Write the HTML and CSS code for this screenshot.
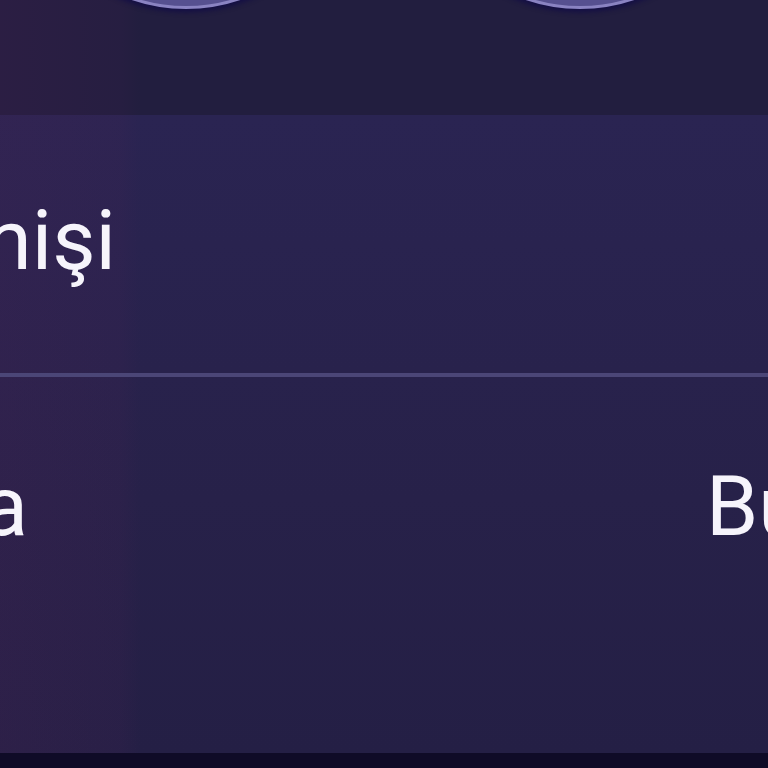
FILE: index.html
```html
<!DOCTYPE html>
<html lang="tr">
<head>
    <meta charset="UTF-8">
    <meta name="viewport" content="width=device-width, initial-scale=1.0">
    <title>Ayarlar</title>
    <link rel="stylesheet" href="styles.css">
</head>
<body>

    <div class="screen">
        <!-- Profile shortcuts above the settings list -->
        <div class="avatars">
            <div class="avatar"></div>
            <div class="avatar"></div>
        </div>

        <div class="card">
            <div class="row">
                <div class="label"><span>Arama geçmişi</span></div>
            </div>
            <div class="divider"></div>
            <div class="row">
                <div class="label"><span>Tema</span></div>
                <div class="value">Bu cihaz</div>
            </div>
        </div>

        <div class="nav-bar"></div>
    </div>

</body>
</html>
```

FILE: styles.css
```css
body {
    margin: 0;
    font-family: Roboto, "Noto Sans", Arial, sans-serif;
    background-color: #221e3f;
    overflow: hidden;
}

.screen {
    display: flex;
    flex-direction: column;
    width: 768px;
    height: 768px;
    overflow: hidden;
    background: linear-gradient(90deg, rgba(70, 30, 80, 0.25) 0, rgba(70, 30, 80, 0.12) 120px, rgba(0, 0, 0, 0) 140px), #221e3f;
}

.avatars {
    display: flex;
    gap: 56px;
    height: 115px;
    padding-left: 17px;
    overflow: hidden;
}

.avatar {
    flex: none;
    width: 332px;
    height: 332px;
    margin-top: -329px;
    border-radius: 50%;
    background-color: #565090;
    border: 3px solid #8a83c2;
    box-shadow: 0 3px 5px rgba(18, 12, 70, 0.9);
}

.card {
    flex: 1;
    display: flex;
    flex-direction: column;
    background: linear-gradient(90deg, rgba(80, 35, 85, 0.2) 0, rgba(80, 35, 85, 0.12) 120px, rgba(0, 0, 0, 0) 140px), linear-gradient(180deg, #2a2452 0, #272149 60%, #241f45 100%);
    color: #f6f4fb;
    font-size: 84px;
}

.row {
    display: flex;
    align-items: center;
    justify-content: space-between;
    height: 258px;
    padding-bottom: 8px;
    box-sizing: border-box;
}

.row:last-child {
    padding-bottom: 0;
}

/* label column is narrow, long titles spill out to the left */
.label {
    display: flex;
    justify-content: flex-end;
    width: 116px;
    white-space: nowrap;
}

.row:last-child .label {
    width: 28px;
}

.value {
    width: 62px;
    white-space: nowrap;
}

.divider {
    height: 4px;
    background-color: #4b4677;
}

.nav-bar {
    height: 15px;
    background-color: #0f0b27;
}
```
